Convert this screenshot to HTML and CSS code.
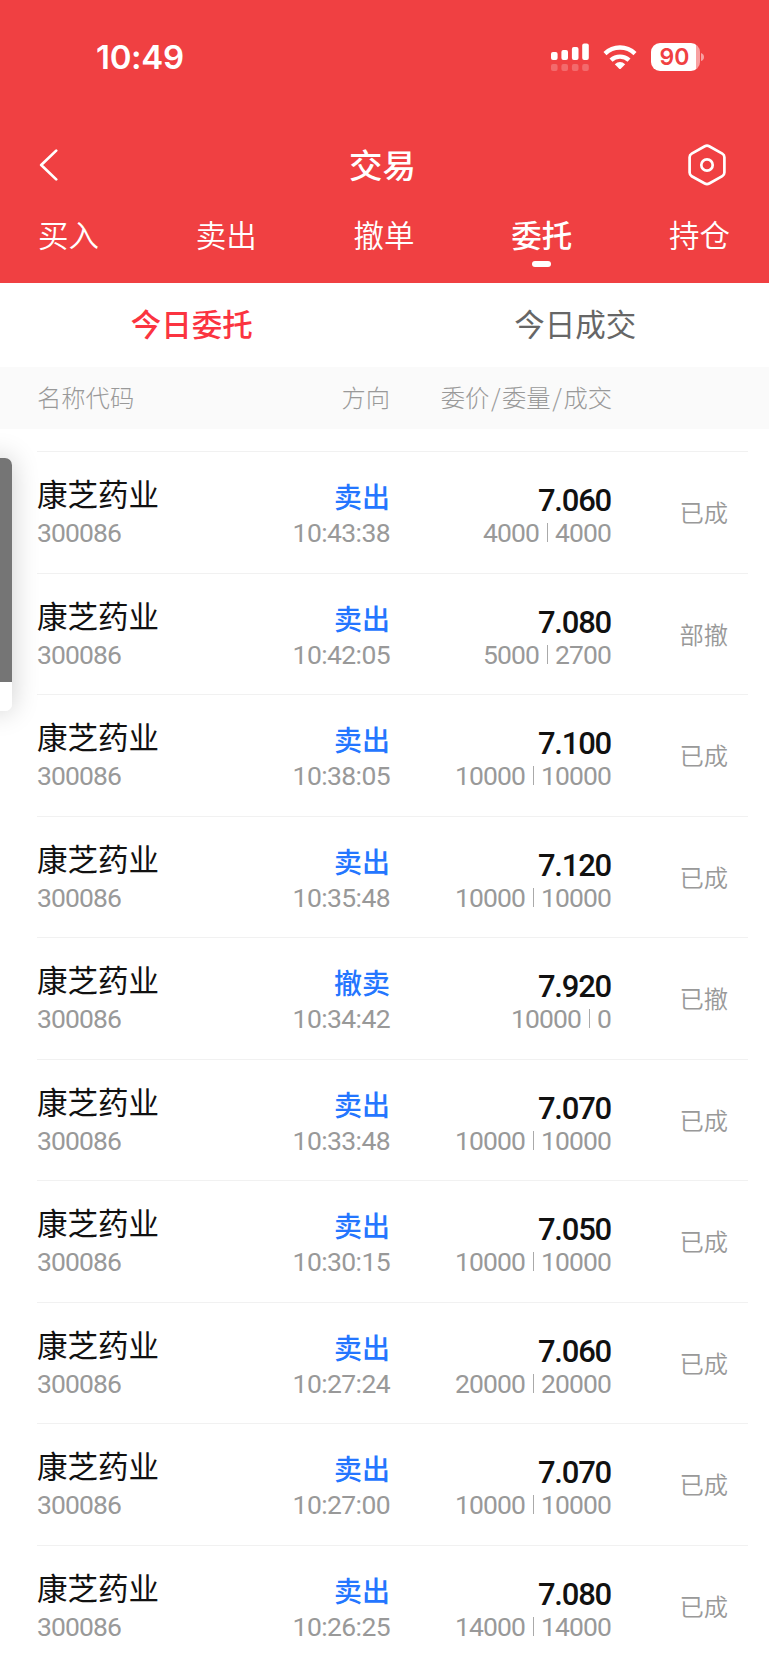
FILE: index.html
```html
<!DOCTYPE html>
<html lang="zh-CN">
<head>
    <meta charset="UTF-8">
    <meta name="viewport" content="width=device-width, initial-scale=1.0">
    <title>交易</title>
    <link rel="stylesheet" href="styles.css">
</head>
<body>
    <header class="header">
        <div class="status-bar">
            <span class="clock">10:49</span>
            <div class="status-icons">
                <svg class="signal" width="38" height="28" viewBox="0 0 38 28" fill="#fff">
                    <rect x="0" y="9" width="6.6" height="8" rx="2"/>
                    <rect x="10.4" y="7" width="6.6" height="10" rx="2"/>
                    <rect x="20.9" y="4" width="6.6" height="13" rx="2"/>
                    <rect x="31.2" y="0.6" width="6.6" height="16.4" rx="2"/>
                    <g opacity="0.22">
                        <rect x="0" y="21" width="6.6" height="7" rx="2"/>
                        <rect x="10.4" y="21" width="6.6" height="7" rx="2"/>
                        <rect x="20.9" y="21" width="6.6" height="7" rx="2"/>
                        <rect x="31.2" y="21" width="6.6" height="7" rx="2"/>
                    </g>
                </svg>
                <svg class="wifi" width="34" height="28" viewBox="0 0 34 28" fill="none" stroke="#fff" stroke-width="4.4">
                    <path d="M2 10.6 A21.6 21.6 0 0 1 32 10.6"/>
                    <path d="M8 17.2 A13.2 13.2 0 0 1 26 17.2"/>
                    <path d="M11.8 21.2 Q17 16.8 22.2 21.2 L17.8 25.7 Q17 26.4 16.2 25.7 Z" fill="#fff" stroke="none"/>
                </svg>
                <div class="battery"><span class="battery-level">90</span></div>
                <svg class="battery-tip" width="4" height="8" viewBox="0 0 4 8"><path d="M0 0 Q3 1 3 4 Q3 7 0 8 Z" fill="#fff" fill-opacity="0.5"/></svg>
            </div>
        </div>
        <div class="nav-bar">
            <svg class="back" width="20" height="32" viewBox="0 0 20 32" fill="none" stroke="#fff" stroke-width="2.7" stroke-linecap="round" stroke-linejoin="round">
                <path d="M17.2 1.6 L2.2 16 L17.2 30.4"/>
            </svg>
            <h1 class="title">交易</h1>
            <svg class="settings" width="38" height="42" viewBox="0 0 38 42" fill="none" stroke="#fff" stroke-width="2.7">
                <path d="M16.8 2.3 Q19 1.1 21.2 2.3 L34.3 9.6 Q36.4 10.8 36.4 13.2 V28.6 Q36.4 31 34.3 32.2 L21.2 39.5 Q19 40.7 16.8 39.5 L3.7 32.2 Q1.6 31 1.6 28.6 V13.2 Q1.6 10.8 3.7 9.6 Z"/>
                <circle cx="19" cy="21" r="5.7"/>
            </svg>
        </div>
        <nav class="tabs">
            <a class="tab">买入</a>
            <a class="tab">卖出</a>
            <a class="tab">撤单</a>
            <a class="tab active">委托</a>
            <a class="tab">持仓</a>
        </nav>
    </header>

    <div class="sub-tabs">
        <a class="sub-tab active">今日委托</a>
        <a class="sub-tab">今日成交</a>
    </div>

    <div class="table-head">
        <span>名称代码</span>
        <span>方向</span>
        <span>委价<i class="slash">/</i>委量<i class="slash">/</i>成交</span>
    </div>

    <main class="orders">
        <div class="order">
            <div class="stock"><p class="name">康芝药业</p><p class="num">300086</p></div>
            <div class="side"><p class="action">卖出</p><p class="num">10:43:38</p></div>
            <div class="deal"><p class="price">7.060</p><p class="num">4000<i class="bar"></i>4000</p></div>
            <div class="state">已成</div>
        </div>
        <div class="order">
            <div class="stock"><p class="name">康芝药业</p><p class="num">300086</p></div>
            <div class="side"><p class="action">卖出</p><p class="num">10:42:05</p></div>
            <div class="deal"><p class="price">7.080</p><p class="num">5000<i class="bar"></i>2700</p></div>
            <div class="state">部撤</div>
        </div>
        <div class="order">
            <div class="stock"><p class="name">康芝药业</p><p class="num">300086</p></div>
            <div class="side"><p class="action">卖出</p><p class="num">10:38:05</p></div>
            <div class="deal"><p class="price">7.100</p><p class="num">10000<i class="bar"></i>10000</p></div>
            <div class="state">已成</div>
        </div>
        <div class="order">
            <div class="stock"><p class="name">康芝药业</p><p class="num">300086</p></div>
            <div class="side"><p class="action">卖出</p><p class="num">10:35:48</p></div>
            <div class="deal"><p class="price">7.120</p><p class="num">10000<i class="bar"></i>10000</p></div>
            <div class="state">已成</div>
        </div>
        <div class="order">
            <div class="stock"><p class="name">康芝药业</p><p class="num">300086</p></div>
            <div class="side"><p class="action">撤卖</p><p class="num">10:34:42</p></div>
            <div class="deal"><p class="price">7.920</p><p class="num">10000<i class="bar"></i>0</p></div>
            <div class="state">已撤</div>
        </div>
        <div class="order">
            <div class="stock"><p class="name">康芝药业</p><p class="num">300086</p></div>
            <div class="side"><p class="action">卖出</p><p class="num">10:33:48</p></div>
            <div class="deal"><p class="price">7.070</p><p class="num">10000<i class="bar"></i>10000</p></div>
            <div class="state">已成</div>
        </div>
        <div class="order">
            <div class="stock"><p class="name">康芝药业</p><p class="num">300086</p></div>
            <div class="side"><p class="action">卖出</p><p class="num">10:30:15</p></div>
            <div class="deal"><p class="price">7.050</p><p class="num">10000<i class="bar"></i>10000</p></div>
            <div class="state">已成</div>
        </div>
        <div class="order">
            <div class="stock"><p class="name">康芝药业</p><p class="num">300086</p></div>
            <div class="side"><p class="action">卖出</p><p class="num">10:27:24</p></div>
            <div class="deal"><p class="price">7.060</p><p class="num">20000<i class="bar"></i>20000</p></div>
            <div class="state">已成</div>
        </div>
        <div class="order">
            <div class="stock"><p class="name">康芝药业</p><p class="num">300086</p></div>
            <div class="side"><p class="action">卖出</p><p class="num">10:27:00</p></div>
            <div class="deal"><p class="price">7.070</p><p class="num">10000<i class="bar"></i>10000</p></div>
            <div class="state">已成</div>
        </div>
        <div class="order">
            <div class="stock"><p class="name">康芝药业</p><p class="num">300086</p></div>
            <div class="side"><p class="action">卖出</p><p class="num">10:26:25</p></div>
            <div class="deal"><p class="price">7.080</p><p class="num">14000<i class="bar"></i>14000</p></div>
            <div class="state">已成</div>
        </div>
    </main>

    <!-- floating window docked at the left edge -->
    <div class="float-dock"></div>
</body>
</html>
```

FILE: styles.css
```css
* {
    box-sizing: border-box;
}
body {
    margin: 0;
    height: 1665px;
    overflow: hidden;
    position: relative;
    background: #fff;
    font-family: 'Noto Sans CJK SC', sans-serif;
    color: #111;
}
p, h1 {
    margin: 0;
}
svg {
    display: block;
    flex: none;
}

/* header */
.header {
    height: 283px;
    background: #f04042;
    color: #fff;
}
.status-bar {
    display: flex;
    justify-content: space-between;
    height: 115px;
    padding: 43px 65px 0 96px;
}
.clock {
    font-family: Inter, sans-serif;
    font-size: 33px;
    font-weight: 600;
    line-height: 29px;
    letter-spacing: -0.3px;
}
.status-icons {
    display: flex;
    height: 28px;
}
.wifi {
    margin-left: 14px;
}
.battery {
    width: 49px;
    height: 28px;
    margin-left: 14px;
    border-radius: 9px;
    background: linear-gradient(to right, #fff 44.5px, #f8a0a1 44.5px);
}
.battery-level {
    display: block;
    width: 47px;
    text-align: center;
    font-family: Inter, sans-serif;
    font-size: 23px;
    font-weight: 600;
    line-height: 28px;
    color: #f04042;
}
.battery-tip {
    margin: 10px -1px 0 1px;
}
.nav-bar {
    display: flex;
    align-items: center;
    justify-content: space-between;
    height: 99px;
    padding: 0 43px 0 39px;
}
.back {
    margin-right: 18px;
}
.title {
    font-size: 33.5px;
    font-weight: 500;
    line-height: 46px;
    padding-bottom: 2px;
}
.tabs {
    display: flex;
    justify-content: space-between;
    padding: 0 39px 0 38px;
}
.tab {
    display: flex;
    flex-direction: column;
    align-items: center;
    font-size: 30.5px;
    font-weight: 350;
    line-height: 40px;
}
.tab.active {
    font-weight: 500;
}
.tab.active::after {
    content: "";
    width: 19px;
    height: 6px;
    margin-top: 7px;
    border-radius: 3px;
    background: #fff;
}

/* sub tabs */
.sub-tabs {
    display: grid;
    grid-template-columns: 1fr 1fr;
    height: 84px;
    padding-right: 2px;
    text-align: center;
    font-size: 30.5px;
    line-height: 80px;
    color: #666;
}
.sub-tab.active {
    font-weight: 500;
    color: #fb3440;
}

/* order list */
.table-head {
    display: grid;
    grid-template-columns: 153px 200px 222px;
    height: 62px;
    padding-left: 37px;
    background: #fafafa;
    font-size: 24.3px;
    font-weight: 300;
    line-height: 60px;
    color: #999;
    text-align: right;
}
.table-head span:first-child {
    text-align: left;
}
.slash {
    padding: 0 1.6px;
    font-style: normal;
}
.orders {
    padding: 22px 21px 0 37px;
}
.order {
    display: grid;
    grid-template-columns: 153px 200px 221px 117px;
    height: 121.55px;
    border-top: 1px solid #f1f1f1;
    text-align: right;
    white-space: nowrap;
}
.stock {
    text-align: left;
}
.name, .action, .price {
    height: 66px;
}
.name {
    font-size: 30.5px;
    line-height: 83px;
}
.action {
    font-size: 28px;
    font-weight: 500;
    line-height: 88px;
    color: #2476ff;
}
.price {
    font-family: Roboto, sans-serif;
    font-size: 31px;
    font-weight: 500;
    line-height: 98px;
    letter-spacing: -1.2px;
}
.num {
    font-family: Roboto, sans-serif;
    font-size: 26.5px;
    line-height: 29px;
    letter-spacing: -0.9px;
    color: #999;
}
.side .num {
    letter-spacing: -0.6px;
}
.bar {
    display: inline-block;
    width: 1px;
    height: 19px;
    margin: 0 7px 0 8px;
    background: #aaa;
}
.state {
    font-size: 24.3px;
    font-weight: 350;
    line-height: 119px;
    color: #999;
}

/* floating dock */
.float-dock {
    position: absolute;
    left: -20px;
    top: 458px;
    width: 32px;
    height: 253px;
    border-radius: 7px;
    background: linear-gradient(#757575 224px, #fff 224px);
    box-shadow: 0 0 28px rgba(0, 0, 0, 0.2);
}
```
